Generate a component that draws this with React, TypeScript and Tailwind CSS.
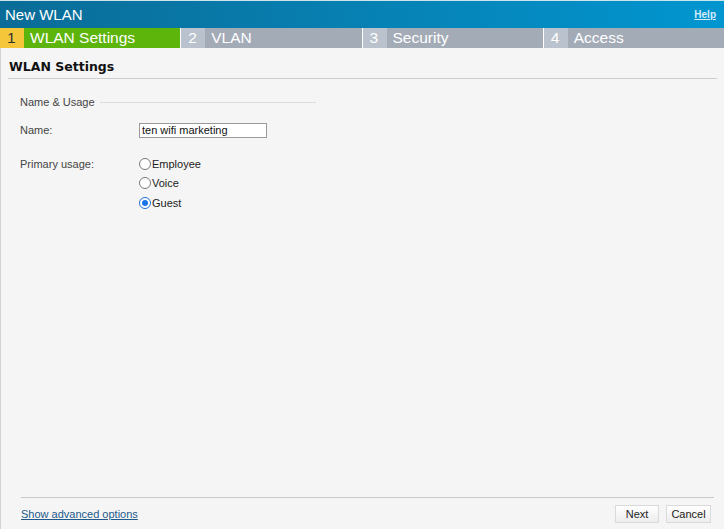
import { useState } from 'react';

const tabs = [
  { n: '1', label: 'WLAN Settings', active: true },
  { n: '2', label: 'VLAN', active: false },
  { n: '3', label: 'Security', active: false },
  { n: '4', label: 'Access', active: false },
];

const usages = ['Employee', 'Voice', 'Guest'];

function Radio({ checked }: { checked: boolean }) {
  return (
    <span
      className={
        'w-[12px] h-[12px] rounded-full border bg-white flex items-center justify-center shrink-0 ' +
        (checked ? 'border-[#1a6fd8]' : 'border-[#7a7a7a]')
      }
    >
      {checked && <span className="w-[6px] h-[6px] rounded-full bg-[#1a73e8]" />}
    </span>
  );
}

export default function App() {
  const [usage, setUsage] = useState('Guest');
  const [name, setName] = useState('ten wifi marketing');

  return (
    <div className="w-full h-[529px] flex flex-col bg-[#f5f5f5] font-['Liberation_Sans',Arial,sans-serif] text-[#333]">
      {/* Title bar */}
      <div className="h-[28px] shrink-0 flex items-center justify-between pl-[5px] pr-[8px] bg-gradient-to-r from-[#0a6c97] to-[#0196d0] border-t border-[#cfe3ec]">
        <span className="text-white text-[15px] leading-none">New WLAN</span>
        <a href="#" className="text-[10px] font-bold underline text-[#d6ecfa] leading-none">
          Help
        </a>
      </div>

      {/* Wizard steps */}
      <div className="h-[20px] shrink-0 grid grid-cols-4 gap-px bg-white">
        {tabs.map((t) => (
          <div key={t.n} className="flex h-full">
            <div
              className={
                'w-[24px] flex items-center pl-[7px] text-[15.5px] leading-none ' +
                (t.active ? 'bg-[#f5c63a] text-[#333]' : 'bg-[#bac2cd] text-white')
              }
            >
              {t.n}
            </div>
            <div
              className={
                'flex-1 flex items-center pl-[6px] text-[15.5px] leading-none text-white ' +
                (t.active ? 'bg-[#5db40b]' : 'bg-[#a3abb7]')
              }
            >
              {t.label}
            </div>
          </div>
        ))}
      </div>

      {/* Content */}
      <div className="flex-1 flex flex-col border-l border-[#d2d2d2]">
        <div className="mx-[7px] pt-[11px] pb-[3px] pl-px border-b border-[#cdcdcd] text-[12.5px] leading-4 font-bold text-[#111] font-['DejaVu_Sans',Verdana,sans-serif]">
          WLAN Settings
        </div>

        <div className="ml-[19px] w-[296px] mt-[16px] flex items-center text-[11px] leading-[14px] text-[#444]">
          <span>Name &amp; Usage</span>
          <span className="flex-1 h-px bg-[#d9dde2] ml-[5px]" />
        </div>

        <div className="ml-[19px] mt-[14px] flex items-center h-[15px] text-[11px]">
          <span className="w-[119px] text-[#444]">Name:</span>
          <input
            value={name}
            onChange={(e) => setName(e.target.value)}
            className="w-[128px] h-[15px] border border-[#9a9a9a] bg-white px-[2px] text-[11px] text-[#111] outline-none font-['Liberation_Sans',Arial,sans-serif]"
          />
        </div>

        <div className="ml-[19px] mt-[16px] flex text-[11px]">
          <span className="w-[119px] h-[19.5px] flex items-center text-[#444]">Primary usage:</span>
          <div className="flex flex-col">
            {usages.map((u) => (
              <label
                key={u}
                onClick={() => setUsage(u)}
                className="h-[19.5px] flex items-center gap-px text-[#222] cursor-pointer"
              >
                <Radio checked={usage === u} />
                <span>{u}</span>
              </label>
            ))}
          </div>
        </div>

        <div className="flex-1" />

        {/* Footer */}
        <div className="ml-[20px] mr-[10px] border-t border-[#c9c9c9] pt-[7px] pb-[6px] flex items-center justify-between">
          <a href="#" className="text-[11px] underline text-[#22598a]">
            Show advanced options
          </a>
          <div className="flex gap-[7px] mr-[3px]">
            <button className="w-[44px] h-[18px] border border-[#dadada] bg-gradient-to-b from-white to-[#ededed] text-[11px] text-[#222] leading-none">
              Next
            </button>
            <button className="w-[45px] h-[18px] border border-[#dadada] bg-gradient-to-b from-white to-[#ededed] text-[11px] text-[#222] leading-none">
              Cancel
            </button>
          </div>
        </div>
      </div>
    </div>
  );
}
